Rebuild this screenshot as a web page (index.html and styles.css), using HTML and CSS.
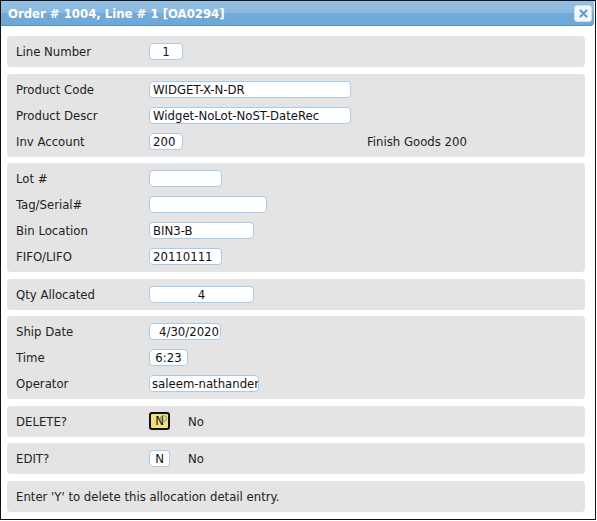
FILE: index.html
```html
<!DOCTYPE html>
<html>
<head>
<meta charset="utf-8">
<link rel="stylesheet" href="styles.css">
</head>
<body>
<div class="dialog">
  <div class="titlebar">
    <span class="title">Order # 1004, Line # 1 [OA0294]</span>
    <span class="close">
      <svg width="9" height="9" viewBox="0 0 9 9"><path d="M1.5 1.5 L7.5 7.5 M7.5 1.5 L1.5 7.5" stroke="#6a9acb" stroke-width="2.2" stroke-linecap="round"/></svg>
    </span>
  </div>
  <div class="content">
    <div class="panel">
      <div class="row"><span class="label">Line Number</span><span class="inp center w34">1</span></div>
    </div>
    <div class="panel">
      <div class="row"><span class="label">Product Code</span><span class="inp w202">WIDGET-X-N-DR</span></div>
      <div class="row"><span class="label">Product Descr</span><span class="inp w202">Widget-NoLot-NoST-DateRec</span></div>
      <div class="row"><span class="label">Inv Account</span><span class="inp w34">200</span><span class="desc">Finish Goods 200</span></div>
    </div>
    <div class="panel">
      <div class="row"><span class="label">Lot #</span><span class="inp w73"></span></div>
      <div class="row"><span class="label">Tag/Serial#</span><span class="inp w118"></span></div>
      <div class="row"><span class="label">Bin Location</span><span class="inp w105">BIN3-B</span></div>
      <div class="row"><span class="label">FIFO/LIFO</span><span class="inp w73">20110111</span></div>
    </div>
    <div class="panel">
      <div class="row"><span class="label">Qty Allocated</span><span class="inp center w105">4</span></div>
    </div>
    <div class="panel">
      <div class="row"><span class="label">Ship Date</span><span class="inp right w72">4/30/2020</span></div>
      <div class="row"><span class="label">Time</span><span class="inp center w39">6:23</span></div>
      <div class="row"><span class="label">Operator</span><span class="inp w110 clip">saleem-nathandem</span></div>
    </div>
    <div class="panel">
      <div class="row"><span class="label">DELETE?</span><span class="inp focus w21">N<span class="ring"></span></span><span class="yn">No</span></div>
    </div>
    <div class="panel">
      <div class="row"><span class="label">EDIT?</span><span class="inp center w21">N</span><span class="yn">No</span></div>
    </div>
    <div class="panel">
      <div class="row"><span class="note">Enter 'Y' to delete this allocation detail entry.</span></div>
    </div>
  </div>
</div>
</body>
</html>
```
FILE: styles.css
```css
html, body {
  margin: 0;
  padding: 0;
  background: #fff;
}
body {
  font-family: "DejaVu Sans Condensed", "DejaVu Sans", sans-serif;
  font-stretch: condensed;
  font-size: 13px;
  color: #222;
}
.dialog {
  width: 596px;
  height: 520px;
  box-sizing: border-box;
  border: 1px solid #111;
  background: #fff;
}
.titlebar {
  height: 25px;
  box-sizing: border-box;
  margin-right: 1px;
  background: linear-gradient(to bottom, #93c1e4 0%, #89b9df 50%, #73aad7 52%, #6ea7d5 100%);
  border-bottom: 1px solid #4b94d4;
  border-radius: 0 0 4px 0;
  display: flex;
  align-items: center;
  justify-content: space-between;
  padding: 0 2px 0 7px;
}
.title {
  color: #fff;
  font-weight: bold;
  font-size: 13px;
}
.close {
  width: 18px;
  height: 17px;
  box-sizing: border-box;
  background: #f1f7fd;
  border: 1px solid #c9def1;
  border-radius: 3px;
  display: flex;
  align-items: center;
  justify-content: center;
}
.content {
  padding: 10px 10px 0 6px;
  display: flex;
  flex-direction: column;
  gap: 6.5px;
}
.panel {
  background: #e4e4e4;
  border-radius: 4px;
  padding: 2.5px 9px;
}
.row {
  height: 26px;
  display: flex;
  align-items: center;
}
.label {
  width: 133px;
  flex: none;
  color: #222;
}
.inp {
  height: 17px;
  box-sizing: border-box;
  border: 1px solid #a9cbea;
  border-radius: 4px;
  background: #fff;
  color: #111;
  padding: 0 3px;
  line-height: 15px;
  white-space: nowrap;
  overflow: hidden;
  flex: none;
  position: relative;
}
.center { text-align: center; }
.right { text-align: right; padding-right: 1px; }
.clip { padding-left: 2px; }
.w21 { width: 21px; padding: 0; text-align: center; }
.w34 { width: 34px; }
.w39 { width: 39px; }
.w72 { width: 72px; }
.w73 { width: 73px; }
.w105 { width: 105px; }
.w110 { width: 110px; }
.w118 { width: 118px; }
.w202 { width: 202px; }
.focus {
  height: 18px;
  border: 2px solid #111;
  border-radius: 3px;
  background: #f2df7e;
  line-height: 14px;
}
.ring {
  position: absolute;
  right: 1px;
  top: 1px;
  width: 7px;
  height: 7px;
  box-sizing: border-box;
  border: 1.5px solid #8a8a8a;
  border-radius: 50%;
}
.desc {
  margin-left: 184px;
}
.yn {
  margin-left: 18px;
}
.note {
  color: #222;
}
```
